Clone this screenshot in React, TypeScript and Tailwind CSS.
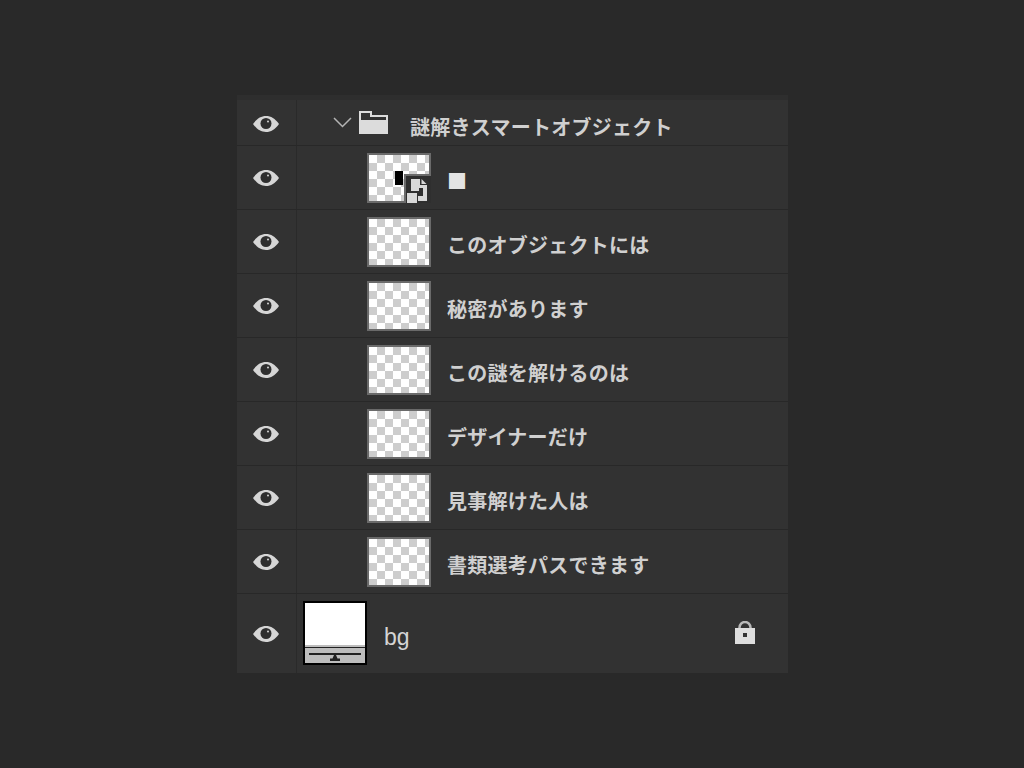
const layers = [
  'このオブジェクトには',
  '秘密があります',
  'この謎を解けるのは',
  'デザイナーだけ',
  '見事解けた人は',
  '書類選考パスできます',
];

const jp = "font-['Noto_Sans_CJK_JP','Noto_Sans',sans-serif] font-bold tracking-[0.25px] text-[20px] leading-none text-[#d0d0d0]";

function Eye() {
  return (
    <svg width="26" height="18" viewBox="0 0 26 18">
      <path d="M0 9C4 3.500 8 1 13 1s9 2.500 13 8c-4 5.500-8 8-13 8S4 14.500 0 9z" fill="#d6d6d6" />
      <circle cx="13" cy="8.500" r="5.500" fill="#2f2f2f" />
      <circle cx="15" cy="6.500" r="1" fill="#d6d6d6" />
    </svg>
  );
}

function EyeCell({ className = '' }: { className?: string }) {
  return (
    <div className={`w-[60px] shrink-0 self-stretch flex items-center justify-center border-r border-[#2a2a2a] pr-[2px] ${className}`}>
      <Eye />
    </div>
  );
}

function Checker({ children }: { children?: React.ReactNode }) {
  return (
    <div className="relative w-[64px] h-[50px] shrink-0 border-2 border-[#6a6a6a] bg-[repeating-conic-gradient(#cdcdcd_0_25%,#ffffff_0_50%)] bg-[length:16px_16px]">
      {children}
    </div>
  );
}

function SmartBadge() {
  return (
    <>
      <div className="absolute left-[26px] top-[16px] w-[8px] h-[14px] bg-black" />
      <div className="absolute -right-[2px] -bottom-[2px] w-[27px] h-[29px] bg-[#2f2f2f] border-l-2 border-t-2 border-[#6a6a6a]">
        <svg className="absolute left-0 top-0" width="25" height="27" viewBox="0 0 25 27">
          <path d="M5 3h9v6h7v16h-9v-5h5v-8h-4v3H5z" fill="#d8d8d8" />
          <path d="M15.500 3l5 5h-5z" fill="#d8d8d8" />
          <rect x="1" y="17" width="10" height="10" fill="#d8d8d8" />
        </svg>
      </div>
    </>
  );
}

function Row({ children }: { children: React.ReactNode }) {
  return <div className="h-[64px] flex items-center border-b border-[#282828]">{children}</div>;
}

export default function App() {
  return (
    <div className="min-h-[768px] bg-[#292929] pt-[95px] pl-[237px]">
      <div className="w-[551px] bg-[#323232]">
        <div className="h-[5px] bg-[#2e2e2e]" />

        {/* group header */}
        <div className="h-[46px] flex items-center border-b border-[#282828]">
          <EyeCell className="pt-[2px]" />
          <svg className="ml-[36px] shrink-0" width="19" height="11" viewBox="0 0 19 11">
            <path d="M1 1l8.500 8.500L18 1" fill="none" stroke="#b4b4b4" strokeWidth="1.500" />
          </svg>
          <svg className="ml-[7px] shrink-0" width="29" height="23" viewBox="0 0 29 23">
            <path d="M0 0h13v4h16v19H0z" fill="#dcdcdc" />
            <path d="M2 2h9v4h16v3H2z" fill="#323232" />
          </svg>
          <span className={`${jp} ml-[22px] mt-[8px]`}>謎解きスマートオブジェクト</span>
        </div>

        <Row>
          <EyeCell />
          <div className="ml-[70px]">
            <Checker>
              <SmartBadge />
            </Checker>
          </div>
          <span className={`${jp} ml-[16px] mt-[6px] text-[#e4e4e4]`}>■</span>
        </Row>

        {layers.map((name) => (
          <Row key={name}>
            <EyeCell />
            <div className="ml-[70px]">
              <Checker />
            </div>
            <span className={`${jp} ml-[16px] mt-[6px]`}>{name}</span>
          </Row>
        ))}

        {/* background layer */}
        <div className="h-[79px] flex items-center">
          <EyeCell />
          <div className="ml-[6px] w-[64px] h-[64px] shrink-0 border-2 border-black bg-[#bdbdbd] flex flex-col mb-[1px]">
            <div className="h-[42px] bg-white" />
            <div className="h-[2px]" />
            <div className="h-[1px] bg-[#222222]" />
            <div className="mx-[4px] mt-[5px] h-[2px] bg-[#222222]" />
            <svg className="mx-auto" width="10" height="6" viewBox="0 0 10 6">
              <path d="M4 0h2l1.500 3.500H10V6H0V3.500h2.500z" fill="#222222" />
            </svg>
          </div>
          <span className="ml-[17px] mt-[8px] font-['Liberation_Sans',sans-serif] text-[23px] leading-none text-[#d4d4d4]">bg</span>
          <svg className="ml-auto mr-[33px] mb-[2px]" width="20" height="23" viewBox="0 0 20 23">
            <path d="M4.500 8V6.500a5.500 5.500 0 0 1 11 0V8" fill="none" stroke="#b8b8b8" strokeWidth="2.500" />
            <path fillRule="evenodd" d="M0 7h20v16H0zM8 12v4h4v-4z" fill="#dedede" />
          </svg>
        </div>
      </div>
    </div>
  );
}
